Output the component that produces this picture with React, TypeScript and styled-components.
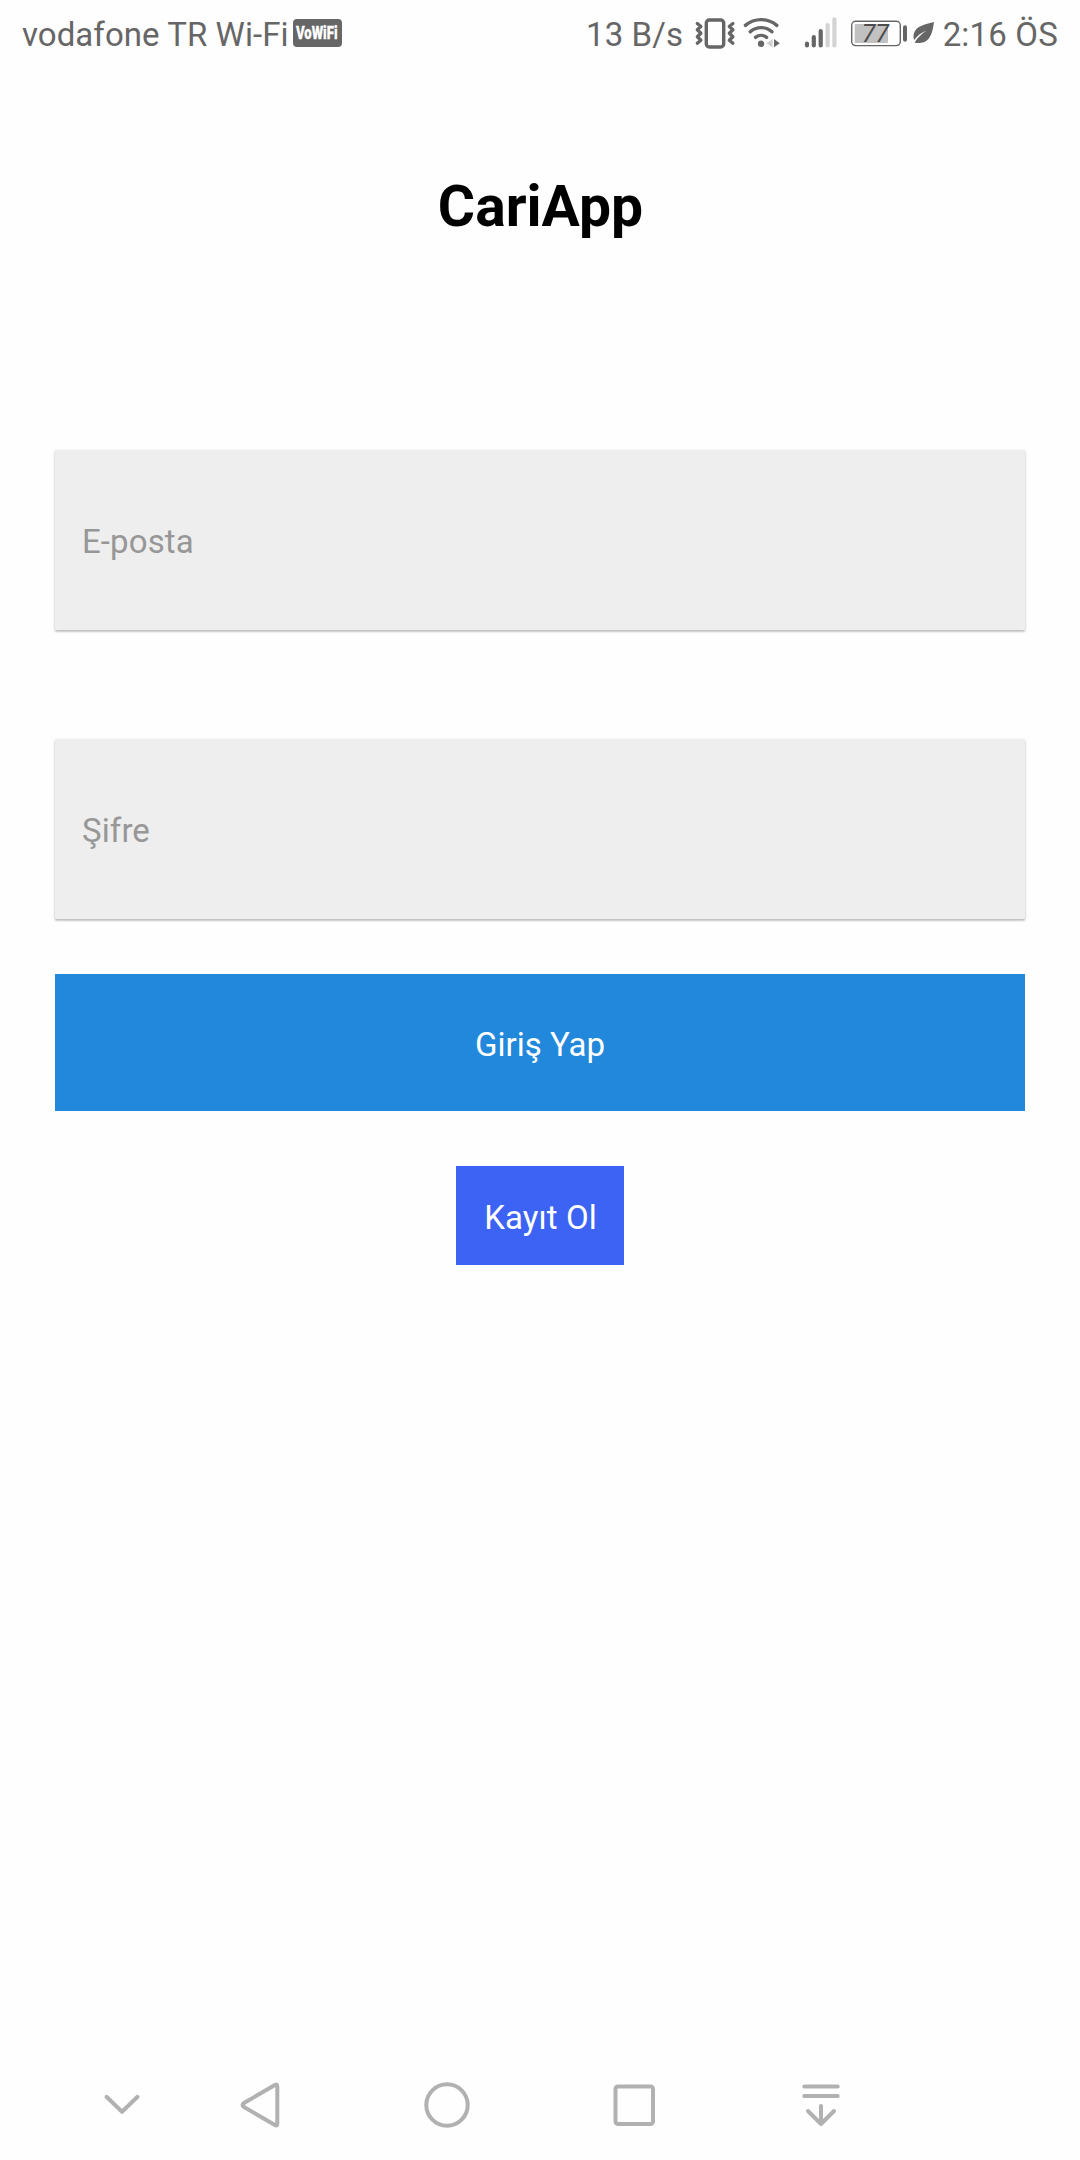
import React from "react";
import styled, { createGlobalStyle } from "styled-components";

const GlobalStyle = createGlobalStyle`
  *, *::before, *::after { box-sizing: border-box; }
  body {
    margin: 0;
    background: #fefefe;
    font-family: Roboto, "Noto Sans", sans-serif;
  }
`;

const Screen = styled.div`
  display: flex;
  flex-direction: column;
  width: 1080px;
  height: 2160px;
  overflow: hidden;
`;

const StatusBar = styled.header`
  display: flex;
  justify-content: space-between;
  align-items: center;
  height: 66px;
  padding: 0 22px;
  color: #666666;
`;

const StatusGroup = styled.div`
  display: flex;
  align-items: center;
`;

const StatusText = styled.span<{ $spacing?: number; $gap?: number }>`
  margin-left: ${(p) => p.$gap ?? 0}px;
  padding-top: 4px;
  font-size: 33px;
  line-height: 40px;
  letter-spacing: ${(p) => p.$spacing ?? 0}px;
  white-space: nowrap;
`;

const StatusIcon = styled.svg<{ $gap: number }>`
  display: block;
  flex: none;
  margin-left: ${(p) => p.$gap}px;
`;

const Title = styled.h1`
  margin: 107px 0 0;
  padding-left: 1px;
  font-size: 57px;
  font-weight: 700;
  line-height: 68px;
  height: 68px;
  text-align: center;
  color: #000000;
`;

const Form = styled.form`
  display: flex;
  flex-direction: column;
  align-items: center;
  margin-top: 209px;
  padding: 0 55px;
`;

const Field = styled.input`
  display: block;
  width: 970px;
  height: 180px;
  margin-bottom: ${(p) => (p.type === "password" ? 55 : 109)}px;
  padding: 2px 27px 0;
  border: 0;
  border-radius: 1px;
  background: #eeeeee;
  box-shadow: 0 1px 3px rgba(0, 0, 0, 0.2), 0 2px 2px rgba(0, 0, 0, 0.13);
  font: 400 33px/40px Roboto, "Noto Sans", sans-serif;
  letter-spacing: 0.1px;
  color: #333333;
  outline: none;
  &::placeholder { color: #979797; opacity: 1; }
`;

const LoginButton = styled.button`
  width: 970px;
  height: 137px;
  padding: 5px 0 0;
  border: 0;
  background: #2288dc;
  color: #ffffff;
  font: 400 33px/40px Roboto, "Noto Sans", sans-serif;
`;

const RegisterButton = styled.button`
  width: 168px;
  height: 99px;
  margin-top: 55px;
  padding: 4px 0 0 1px;
  border: 0;
  background: #3d63f4;
  color: #ffffff;
  font: 400 33px/40px Roboto, "Noto Sans", sans-serif;
  letter-spacing: 0.1px;
  white-space: nowrap;
`;

const NavBar = styled.nav`
  display: flex;
  align-items: center;
  height: 110px;
  margin-top: auto;
  padding-left: 76px;
`;

const NavItem = styled.div<{ $width: number }>`
  display: flex;
  justify-content: center;
  flex: none;
  width: ${(p) => p.$width}px;
`;

const NavIcon = styled.svg`
  display: block;
  width: 60px;
  height: 60px;
  fill: none;
  stroke: #b1b1b1;
  stroke-width: 4;
  stroke-linecap: round;
  stroke-linejoin: round;
`;

const VoWifiBadge = styled.span`
  display: flex;
  align-items: center;
  justify-content: center;
  width: 49px;
  height: 28px;
  margin-left: 4px;
  border-radius: 4px;
  background: #666666;
`;

const VoWifiLabel = styled.span`
  flex: none;
  font-size: 17.5px;
  font-weight: 900;
  line-height: 28px;
  color: #ffffff;
  -webkit-text-stroke: 0.3px #ffffff;
  transform: scaleX(0.75);
`;

const VibrateIcon = () => (
  <StatusIcon $gap={11} width="42" height="32" viewBox="694 17 42 32" fill="none" stroke="#666" strokeLinecap="round" strokeLinejoin="round">
    <rect x="706.3" y="20" width="17.4" height="27" rx="3" strokeWidth="3.4" />
    <path d="M697.3 23.5l3.6 3-3.6 3.3 3.6 3.4-3.6 3.5 3.6 3.5-3.6 3" strokeWidth="3.3" />
    <path d="M732.9 23.5l-3.6 3 3.6 3.3-3.6 3.4 3.6 3.5-3.6 3.5 3.6 3" strokeWidth="3.3" />
  </StatusIcon>
);

const WifiIcon = () => (
  <StatusIcon $gap={7} width="38" height="32" viewBox="743 17 38 32" fill="none" stroke="#666" strokeWidth="3.4" strokeLinecap="round">
    <path d="M745.4 25.4a24.3 24.3 0 0 1 31.4 0" />
    <path d="M750.3 31.8a16 16 0 0 1 21.6 0" />
    <path d="M755.6 37.4a8.6 8.6 0 0 1 11 0" />
    <circle cx="761.1" cy="43.8" r="3.2" fill="#666" stroke="none" />
    <path d="M772.6 39v8.3l-6.2-4.1z" fill="#d0d0d0" stroke="none" />
    <path d="M774 39v8.3l5.8-4.1z" fill="#666" stroke="none" />
  </StatusIcon>
);

const SignalIcon = () => (
  <StatusIcon $gap={23} width="34" height="32" viewBox="804 17 34 32" strokeWidth="4.2" strokeLinecap="round">
    <path d="M807 43.6v1.8M813.8 37v8.4M820.7 31v14.4" stroke="#666" />
    <path d="M827.6 25v20.4M834.4 19.4v26" stroke="#d3d3d3" />
  </StatusIcon>
);

const BatteryIcon = () => (
  <StatusIcon $gap={13} width="57" height="32" viewBox="851 17 57 32">
    <rect x="851.7" y="21.2" width="48.6" height="24.4" rx="4" fill="none" stroke="#666" strokeWidth="1.4" />
    <rect x="854.7" y="24" width="33.3" height="19" rx="1" fill="#c1c1c1" />
    <rect x="903" y="25.2" width="4" height="16.6" rx="2" fill="#666" />
    <text x="875.3" y="42" fontSize="25" fontStyle="italic" textAnchor="middle" fill="#4c4c4c">77</text>
  </StatusIcon>
);

const LeafIcon = () => (
  <StatusIcon $gap={5} width="22" height="32" viewBox="913 17 22 32">
    <path d="M934 22c-8 2-15.500 3.500-18.700 8.500-2 3-2.300 6.500-1.200 9.500 3.300-4.300 7.500-7.500 12.500-9.400-5 3.400-9 7-12 11.900 5 1.300 11 .4 14.400-4.200 3.200-4.500 4.200-10.500 5-16.300z" fill="#666" />
  </StatusIcon>
);

const App = () => (
  <>
    <GlobalStyle />
    <Screen>
      <StatusBar>
        <StatusGroup>
          <StatusText $spacing={0.06}>vodafone TR Wi-Fi</StatusText>
          <VoWifiBadge><VoWifiLabel>VoWiFi</VoWifiLabel></VoWifiBadge>
        </StatusGroup>
        <StatusGroup>
          <StatusText $spacing={0.1}>13 B/s</StatusText>
          <VibrateIcon />
          <WifiIcon />
          <SignalIcon />
          <BatteryIcon />
          <LeafIcon />
          <StatusText $gap={7.5} $spacing={0.18}>2:16 ÖS</StatusText>
        </StatusGroup>
      </StatusBar>
      <Title>CariApp</Title>
      <Form onSubmit={(e) => e.preventDefault()}>
        <Field type="email" placeholder="E-posta" />
        <Field type="password" placeholder="Şifre" />
        <LoginButton type="submit">Giriş Yap</LoginButton>
        <RegisterButton type="button">Kayıt Ol</RegisterButton>
      </Form>
      <NavBar>
        <NavItem $width={92}>
          <NavIcon viewBox="0 0 60 60"><path d="M14.500 21.800L30 36.800l15.500-15" /></NavIcon>
        </NavItem>
        <NavItem $width={185}>
          <NavIcon viewBox="0 0 60 60"><path d="M46.300 11.500v37q0 2.800-2.400 1.500L13 32q-3-2 0-4L43.900 10q2.400-1.300 2.400 1.500z" /></NavIcon>
        </NavItem>
        <NavItem $width={187}>
          <NavIcon viewBox="0 0 60 60"><circle cx="30" cy="30" r="20.700" /></NavIcon>
        </NavItem>
        <NavItem $width={187}>
          <NavIcon viewBox="0 0 60 60"><rect x="11.500" y="11.500" width="37.500" height="37.500" rx="2.500" /></NavIcon>
        </NavItem>
        <NavItem $width={187}>
          <NavIcon viewBox="0 0 60 60"><path d="M13.300 11.500h33.400M13.300 21h33.400M30 31v18M17 36l13 13 13-13" /></NavIcon>
        </NavItem>
      </NavBar>
    </Screen>
  </>
);

export default App;
